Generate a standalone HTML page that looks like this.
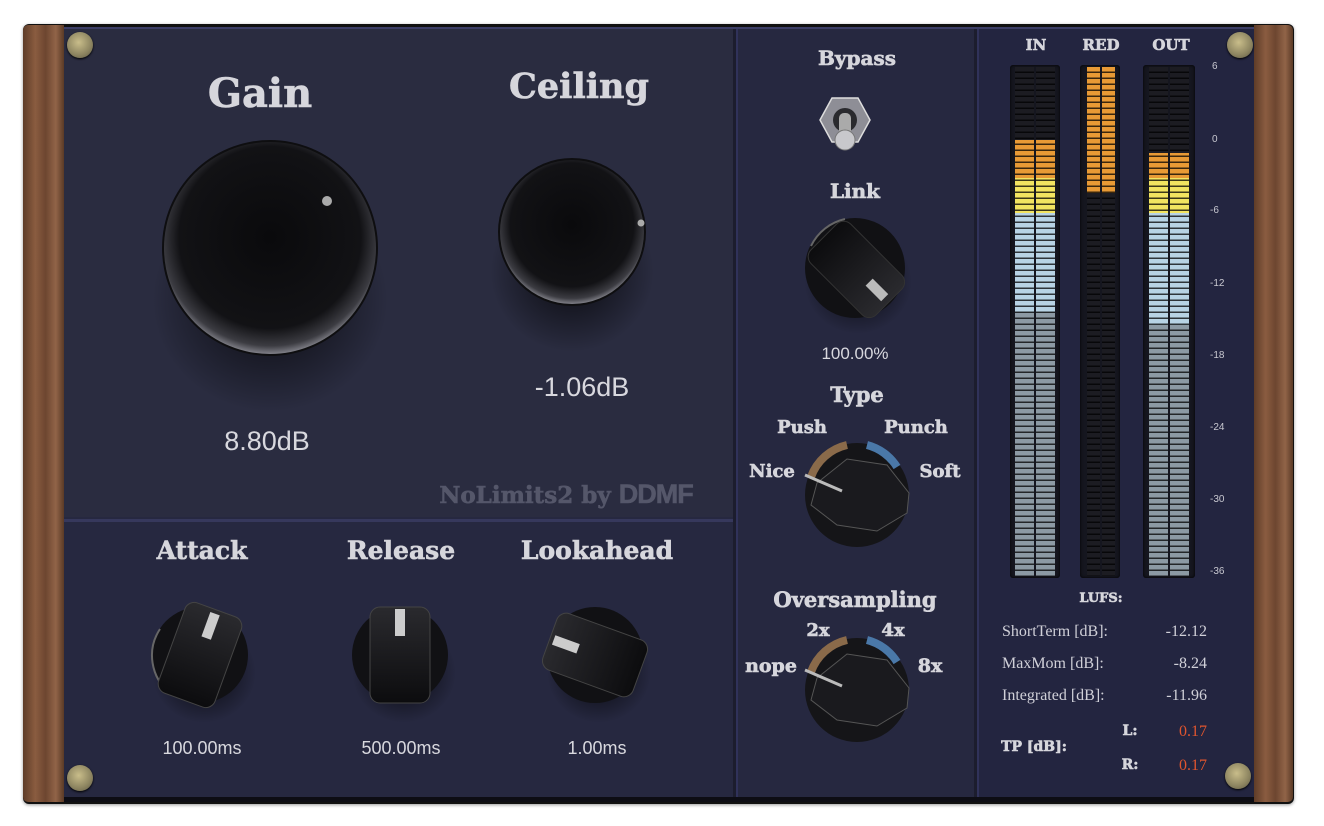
<!DOCTYPE html>
<html><head><meta charset="utf-8">
<style>
*{margin:0;padding:0;box-sizing:border-box}
body{width:1324px;height:826px;background:#fff;position:relative;overflow:hidden;font-family:"Liberation Sans",sans-serif}
.abs{position:absolute}
.h{position:absolute;font-family:"DejaVu Serif","Liberation Serif",serif;font-weight:bold;color:#d6d6dc;transform:translateX(-50%);white-space:nowrap;-webkit-text-stroke:0.6px #d6d6dc}
.v{position:absolute;font-family:"Liberation Sans",sans-serif;color:#d8d8de;transform:translateX(-50%);white-space:nowrap}
.s{position:absolute;font-family:"Liberation Sans",sans-serif;color:#c8c8d0;font-size:10px}
.l{position:absolute;font-family:"Liberation Serif",serif;color:#d0d0d8;font-size:16px;white-space:nowrap}
.screw{position:absolute;width:26px;height:26px;border-radius:50%;background:radial-gradient(circle at 45% 40%,#c9bd8a,#8c8460 60%,#5a5540);box-shadow:0 1px 2px #000}
.well{position:absolute;top:65px;height:513px;background:#15161f;border-radius:3px;box-shadow:inset 0 0 3px #000}
.bar{position:absolute}
.seg{position:absolute;inset:0;background:repeating-linear-gradient(to bottom,transparent 0 4.5px,rgba(0,0,0,.75) 4.5px 6px)}
.gap{position:absolute;top:0;bottom:0;left:50%;width:2px;margin-left:-1px;background:#15161f}
</style></head><body>
<div class="abs" style="left:23px;top:24px;width:1271px;height:780px;background:#111;border-radius:6px;box-shadow:0 1px 3px rgba(0,0,0,.4)"></div>
<div class="abs" style="left:23px;top:25px;width:41px;height:777px;background:linear-gradient(90deg,#5e3c28,#8a5c40 30%,#6d4630 55%,#916448 80%,#5a3a26);border-radius:5px 0 0 5px"></div>
<div class="abs" style="left:1254px;top:25px;width:39px;height:777px;background:linear-gradient(90deg,#5e3c28,#8a5c40 30%,#6d4630 55%,#916448 80%,#5a3a26);border-radius:0 5px 5px 0"></div>
<div class="abs" style="left:64px;top:27px;width:1190px;height:772px;background:#262840;border-top:2px solid #3c3e66"></div>
<div class="abs" style="left:64px;top:29px;width:670px;height:488px;background:#2a2c40"></div>
<div class="abs" style="left:64px;top:519px;width:670px;height:3px;background:#36385c"></div>
<div class="abs" style="left:733px;top:29px;width:3px;height:770px;background:#1c1d2e"></div>
<div class="abs" style="left:736px;top:29px;width:2px;height:770px;background:#30325a"></div>
<div class="abs" style="left:974px;top:29px;width:3px;height:770px;background:#1c1d2e"></div>
<div class="abs" style="left:977px;top:29px;width:2px;height:770px;background:#30325a"></div>
<div class="abs" style="left:979px;top:29px;width:275px;height:770px;background:#232540"></div>
<div class="abs" style="left:64px;top:797px;width:1190px;height:5px;background:#0d0d14"></div>

<div class="screw" style="left:67px;top:32px"></div>
<div class="screw" style="left:1227px;top:32px"></div>
<div class="screw" style="left:67px;top:765px"></div>
<div class="screw" style="left:1225px;top:763px"></div>

<div class="h" style="left:260px;top:70px;font-size:40px">Gain</div>
<div class="h" style="left:579px;top:66px;font-size:35px">Ceiling</div>
<div class="v" style="left:267px;top:426px;font-size:27px">8.80dB</div>
<div class="v" style="left:582px;top:372px;font-size:27px">-1.06dB</div>
<div class="h" style="left:566px;top:479px;font-size:23px;color:#55576a;-webkit-text-stroke:0.6px #55576a">NoLimits2 by <span style="font-family:'Liberation Sans',sans-serif;font-weight:900;font-size:27px;letter-spacing:-1px">DDMF</span></div>

<svg class="abs" style="left:0;top:0" width="1324" height="826">
<defs>
<radialGradient id="kb" cx="50%" cy="45%" r="55%"><stop offset="0" stop-color="#0a0a0c"/><stop offset=".78" stop-color="#121215"/><stop offset=".93" stop-color="#3c3c42"/><stop offset="1" stop-color="#808088"/></radialGradient>
<radialGradient id="sh" cx="50%" cy="50%" r="50%"><stop offset="0" stop-color="#000" stop-opacity=".8"/><stop offset="1" stop-color="#000" stop-opacity="0"/></radialGradient>
<linearGradient id="sk" x1="0" y1="0" x2="0" y2="1"><stop offset="0" stop-color="#2a2a2e"/><stop offset="1" stop-color="#0c0c0e"/></linearGradient>
</defs>
<ellipse cx="270" cy="300" rx="118" ry="112" fill="url(#sh)"/>
<circle cx="270" cy="248" r="108" fill="#0e0e10"/>
<circle cx="270" cy="248" r="106" fill="url(#kb)"/>
<circle cx="327" cy="201" r="5" fill="#aaa"/>
<ellipse cx="572" cy="272" rx="82" ry="80" fill="url(#sh)"/>
<circle cx="572" cy="232" r="74" fill="#0e0e10"/>
<circle cx="572" cy="232" r="72" fill="url(#kb)"/>
<circle cx="641" cy="223" r="3.5" fill="#aaa"/>

<g transform="translate(200,655)">
<ellipse cx="4" cy="18" rx="52" ry="50" fill="url(#sh)"/>
<circle r="48" fill="#111114"/>
<path d="M-40,-26 A48,48 0 0 0 -30,38" stroke="#666" stroke-width="2" fill="none"/>
<g transform="rotate(20)"><rect x="-30" y="-48" width="60" height="96" rx="10" fill="url(#sk)" stroke="#444" stroke-width="1"/><rect x="-5" y="-44" width="10" height="26" fill="#ccc"/></g>
</g>
<g transform="translate(400,655)">
<ellipse cx="4" cy="18" rx="52" ry="50" fill="url(#sh)"/>
<circle r="48" fill="#111114"/>
<rect x="-30" y="-48" width="60" height="96" rx="10" fill="url(#sk)" stroke="#444" stroke-width="1"/><rect x="-5" y="-46" width="10" height="27" fill="#ccc"/>
</g>
<g transform="translate(595,655)">
<ellipse cx="4" cy="18" rx="52" ry="50" fill="url(#sh)"/>
<circle r="48" fill="#111114"/>
<g transform="rotate(-70)"><rect x="-30" y="-48" width="60" height="96" rx="10" fill="url(#sk)" stroke="#444" stroke-width="1"/><rect x="-5" y="-44" width="10" height="26" fill="#ccc"/></g>
</g>
<g transform="translate(855,268)">
<ellipse cx="3" cy="14" rx="54" ry="52" fill="url(#sh)"/>
<circle r="50" fill="#111114"/>
<path d="M-44,-22 A50,50 0 0 1 -10,-49" stroke="#666" stroke-width="2" fill="none"/>
<g transform="rotate(135)"><rect x="-28" y="-48" width="56" height="92" rx="10" fill="url(#sk)" stroke="#333" stroke-width="1"/><rect x="-5" y="-42" width="10" height="22" fill="#bbb"/></g>
</g>
<g transform="translate(845,120)">
<polygon points="-25,0 -13,-22 13,-22 25,0 13,22 -13,22" fill="#8e8e96" stroke="#ddd" stroke-width="1.5"/>
<circle r="12" fill="#2a2a2e"/>
<rect x="-6" y="-7" width="12" height="24" rx="5" fill="#aaa"/>
<circle cx="0" cy="20" r="10" fill="#c8c8cc" stroke="#777"/>
</g>
<g transform="translate(857,495)">
<circle r="52" fill="#151518"/>
<path d="M-46,-18 A50,50 0 0 1 -10,-50" stroke="#8a6a4a" stroke-width="8" fill="none"/>
<path d="M10,-50 A50,50 0 0 1 40,-28" stroke="#4a78a8" stroke-width="8" fill="none"/>
<path d="M-40,-12 L-10,-36 L30,-30 L52,-2 L50,18 L20,36 L-20,30 L-46,10 Z" fill="#1a1a1e" stroke="#555"/>
<line x1="-52" y1="-20" x2="-15" y2="-4" stroke="#bbb" stroke-width="3"/>
</g>
<g transform="translate(857,690)">
<circle r="52" fill="#151518"/>
<path d="M-46,-18 A50,50 0 0 1 -10,-50" stroke="#8a6a4a" stroke-width="8" fill="none"/>
<path d="M10,-50 A50,50 0 0 1 40,-28" stroke="#4a78a8" stroke-width="8" fill="none"/>
<path d="M-40,-12 L-10,-36 L30,-30 L52,-2 L50,18 L20,36 L-20,30 L-46,10 Z" fill="#1a1a1e" stroke="#555"/>
<line x1="-52" y1="-20" x2="-15" y2="-4" stroke="#bbb" stroke-width="3"/>
</g>
</svg>

<div class="h" style="left:202px;top:536px;font-size:25px">Attack</div>
<div class="h" style="left:401px;top:536px;font-size:25px">Release</div>
<div class="h" style="left:597px;top:536px;font-size:25px">Lookahead</div>
<div class="v" style="left:202px;top:738px;font-size:18px">100.00ms</div>
<div class="v" style="left:401px;top:738px;font-size:18px">500.00ms</div>
<div class="v" style="left:597px;top:738px;font-size:18px">1.00ms</div>

<div class="h" style="left:857px;top:46px;font-size:20px">Bypass</div>
<div class="h" style="left:855px;top:179px;font-size:20px">Link</div>
<div class="v" style="left:855px;top:344px;font-size:17px">100.00%</div>
<div class="h" style="left:857px;top:382px;font-size:21px">Type</div>
<div class="h" style="left:802px;top:417px;font-size:18px">Push</div>
<div class="h" style="left:916px;top:417px;font-size:18px">Punch</div>
<div class="h" style="left:772px;top:461px;font-size:18px">Nice</div>
<div class="h" style="left:940px;top:461px;font-size:18px">Soft</div>
<div class="h" style="left:855px;top:587px;font-size:21px">Oversampling</div>
<div class="h" style="left:818px;top:620px;font-size:18px">2x</div>
<div class="h" style="left:893px;top:620px;font-size:18px">4x</div>
<div class="h" style="left:771px;top:655px;font-size:19px">nope</div>
<div class="h" style="left:930px;top:655px;font-size:19px">8x</div>

<div class="h" style="left:1036px;top:36px;font-size:15px">IN</div>
<div class="h" style="left:1101px;top:36px;font-size:15px">RED</div>
<div class="h" style="left:1171px;top:36px;font-size:15px">OUT</div>
<div class="well" style="left:1010px;width:50px"></div>
<div class="well" style="left:1080px;width:40px"></div>
<div class="well" style="left:1143px;width:52px"></div>
<div class="bar" style="left:1015px;top:67px;width:40px;height:509px;background:linear-gradient(to bottom,#1c1c22 0 73px,#e89a35 73px 111px,#f2e460 111px 146px,#b7d3e4 146px 245px,#8c9aa4 245px)"><div class="seg"></div><div class="gap"></div></div>
<div class="bar" style="left:1087px;top:67px;width:28px;height:509px;background:linear-gradient(to bottom,#e89a35 0 126px,#1c1c22 126px)"><div class="seg"></div><div class="gap"></div></div>
<div class="bar" style="left:1149px;top:67px;width:40px;height:509px;background:linear-gradient(to bottom,#1c1c22 0 86px,#e89a35 86px 111px,#f2e460 111px 146px,#b7d3e4 146px 258px,#8c9aa4 258px)"><div class="seg"></div><div class="gap"></div></div>
<div class="s" style="left:1212px;top:61px">6</div>
<div class="s" style="left:1212px;top:134px">0</div>
<div class="s" style="left:1210px;top:205px">-6</div>
<div class="s" style="left:1210px;top:278px">-12</div>
<div class="s" style="left:1210px;top:350px">-18</div>
<div class="s" style="left:1210px;top:422px">-24</div>
<div class="s" style="left:1210px;top:494px">-30</div>
<div class="s" style="left:1210px;top:566px">-36</div>

<div class="h" style="left:1101px;top:591px;font-size:13px">LUFS:</div>
<div class="l" style="left:1002px;top:623px">ShortTerm [dB]:</div>
<div class="l" style="left:1002px;top:655px">MaxMom [dB]:</div>
<div class="l" style="left:1002px;top:687px">Integrated [dB]:</div>
<div class="l" style="left:1150px;top:623px;width:57px;text-align:right">-12.12</div>
<div class="l" style="left:1150px;top:655px;width:57px;text-align:right">-8.24</div>
<div class="l" style="left:1150px;top:687px;width:57px;text-align:right">-11.96</div>
<div class="h" style="left:1034px;top:739px;font-size:14px">TP [dB]:</div>
<div class="h" style="left:1130px;top:723px;font-size:14px">L:</div>
<div class="h" style="left:1130px;top:757px;font-size:14px">R:</div>
<div class="l" style="left:1150px;top:723px;width:57px;text-align:right;color:#e0552e">0.17</div>
<div class="l" style="left:1150px;top:757px;width:57px;text-align:right;color:#e0552e">0.17</div>
</body></html>
